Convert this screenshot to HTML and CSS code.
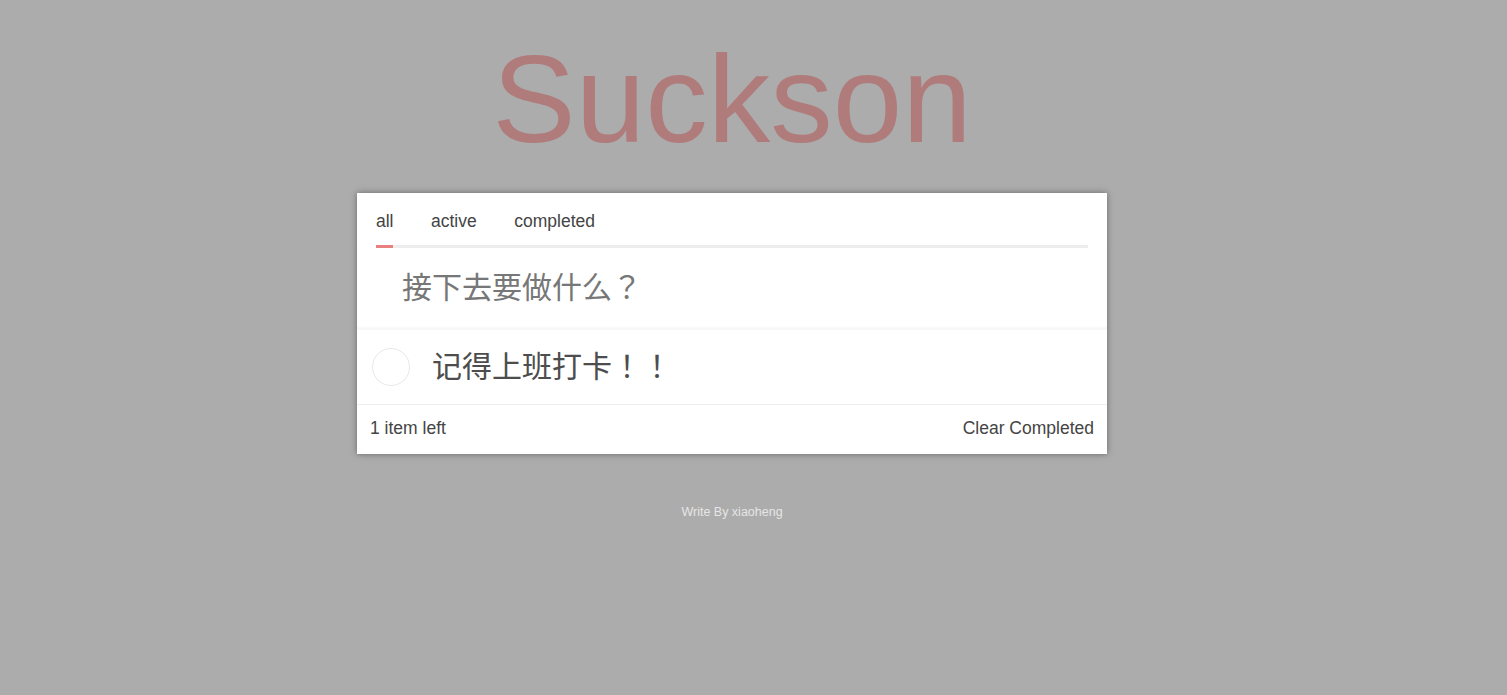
FILE: index.html
```html
<!DOCTYPE html>
<html lang="zh-CN">
<head>
<meta charset="utf-8">
<title>Suckson</title>
<link rel="stylesheet" href="styles.css">
</head>
<body>
<div class="page">
  <header class="header">
    <h1 class="title">Suckson</h1>
  </header>
  <section class="app">
    <div class="tabs">
      <span class="tab tab-active">all</span>
      <span class="tab">active</span>
      <span class="tab">completed</span>
    </div>
    <div class="tab-line"><span class="tab-line-bar"></span></div>
    <input class="add-input" type="text" lang="ja" placeholder="接下去要做什么？">
    <div class="todo-item">
      <span class="toggle"></span>
      <span class="todo-text" lang="ja">记得上班打卡！！</span>
    </div>
    <div class="app-footer">
      <span class="left">1 item left</span>
      <span class="clear">Clear Completed</span>
    </div>
  </section>
  <footer class="credit">Write By xiaoheng</footer>
</div>
</body>
</html>
```

FILE: styles.css
```css
html, body {
  margin: 0;
  padding: 0;
}
body {
  background: #acacac;
  font-family: "Liberation Sans", Arial, "Noto Sans CJK SC", sans-serif;
  color: #4d4d4d;
  height: 695px;
  overflow: hidden;
}
.page {
  width: 1464px;
  display: flex;
  flex-direction: column;
  align-items: center;
}
.header {
  padding-top: 36px;
  text-align: center;
}
.title {
  margin: 0;
  font-size: 125px;
  line-height: 125px;
  font-weight: normal;
  color: #b07c7b;
}
.app {
  margin-top: 32px;
  width: 750px;
  background: #fff;
  box-shadow: 0 0 6px #666;
  display: flex;
  flex-direction: column;
}
.tabs {
  display: flex;
  gap: 37.5px;
  padding: 18px 19px 0;
  height: 34px;
  font-size: 17.5px;
  line-height: 20px;
  color: #444;
}
.tab-line {
  margin: 0 19px;
  height: 3px;
  background: #ededed;
  display: flex;
}
.tab-line-bar {
  width: 17px;
  background: #e88080;
}
.add-input {
  display: block;
  width: 100%;
  box-sizing: border-box;
  margin: 0;
  border: none;
  outline: none;
  font-family: "Liberation Sans", Arial, "Noto Sans CJK JP", sans-serif;
  font-size: 30px;
  line-height: 42px;
  height: 82px;
  padding: 19px 20px 21px 45px;
  color: #4d4d4d;
  box-shadow: inset 0 -3px 2px rgba(0, 0, 0, 0.03);
}
.add-input::placeholder {
  color: #777;
}
.todo-item {
  display: flex;
  align-items: center;
  height: 74px;
  border-bottom: 1px solid #ededed;
}
.toggle {
  width: 36px;
  height: 36px;
  border: 1px solid #e8e8e8;
  border-radius: 50%;
  margin-left: 15px;
  flex-shrink: 0;
}
.todo-text {
  margin-left: 22px;
  margin-bottom: 6px;
  font-family: "Liberation Sans", Arial, "Noto Sans CJK JP", sans-serif;
  font-size: 30px;
  color: #4d4d4d;
}
.app-footer {
  display: flex;
  justify-content: space-between;
  align-items: center;
  height: 49px;
  padding: 0 13px 3px;
  box-sizing: border-box;
  font-size: 17.5px;
  line-height: 20px;
  color: #444;
}
.credit {
  margin-top: 51px;
  font-size: 12.5px;
  color: #e6e6e6;
  text-align: center;
}
```
